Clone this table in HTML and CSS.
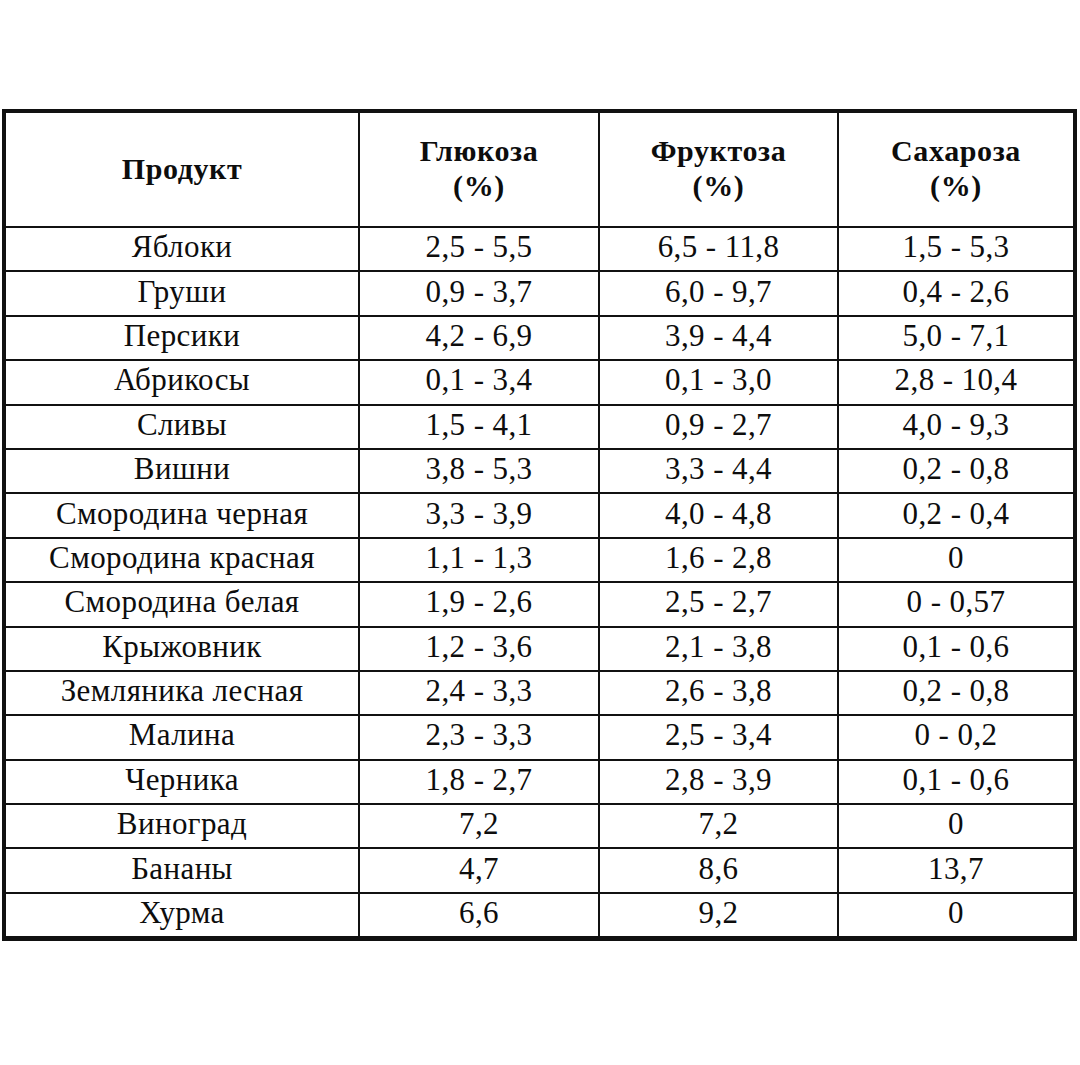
FILE: index.html
```html
<!DOCTYPE html>
<html lang="ru">
<head>
<meta charset="utf-8">
<title>Сахара в фруктах</title>
<link rel="stylesheet" href="styles.css">
</head>
<body>
<div class="frame">
<table class="sugar">
<thead>
<tr><th>Продукт</th><th>Глюкоза<br>(%)</th><th>Фруктоза<br>(%)</th><th>Сахароза<br>(%)</th></tr>
</thead>
<tbody>
<tr><td>Яблоки</td><td>2,5 - 5,5</td><td>6,5 - 11,8</td><td>1,5 - 5,3</td></tr>
<tr><td>Груши</td><td>0,9 - 3,7</td><td>6,0 - 9,7</td><td>0,4 - 2,6</td></tr>
<tr><td>Персики</td><td>4,2 - 6,9</td><td>3,9 - 4,4</td><td>5,0 - 7,1</td></tr>
<tr><td>Абрикосы</td><td>0,1 - 3,4</td><td>0,1 - 3,0</td><td>2,8 - 10,4</td></tr>
<tr><td>Сливы</td><td>1,5 - 4,1</td><td>0,9 - 2,7</td><td>4,0 - 9,3</td></tr>
<tr><td>Вишни</td><td>3,8 - 5,3</td><td>3,3 - 4,4</td><td>0,2 - 0,8</td></tr>
<tr><td>Смородина черная</td><td>3,3 - 3,9</td><td>4,0 - 4,8</td><td>0,2 - 0,4</td></tr>
<tr><td>Смородина красная</td><td>1,1 - 1,3</td><td>1,6 - 2,8</td><td>0</td></tr>
<tr><td>Смородина белая</td><td>1,9 - 2,6</td><td>2,5 - 2,7</td><td>0 - 0,57</td></tr>
<tr><td>Крыжовник</td><td>1,2 - 3,6</td><td>2,1 - 3,8</td><td>0,1 - 0,6</td></tr>
<tr><td>Земляника лесная</td><td>2,4 - 3,3</td><td>2,6 - 3,8</td><td>0,2 - 0,8</td></tr>
<tr><td>Малина</td><td>2,3 - 3,3</td><td>2,5 - 3,4</td><td>0 - 0,2</td></tr>
<tr><td>Черника</td><td>1,8 - 2,7</td><td>2,8 - 3,9</td><td>0,1 - 0,6</td></tr>
<tr><td>Виноград</td><td>7,2</td><td>7,2</td><td>0</td></tr>
<tr><td>Бананы</td><td>4,7</td><td>8,6</td><td>13,7</td></tr>
<tr><td>Хурма</td><td>6,6</td><td>9,2</td><td>0</td></tr>
</tbody>
</table>
</div>
</body>
</html>
```
FILE: styles.css
```css
html, body {
  margin: 0;
  padding: 0;
  background: #fff;
}
body {
  padding-top: 109px;
  padding-left: 2px;
  font-family: "Liberation Serif", "Times New Roman", serif;
  color: #0d0d0d;
}
.frame {
  width: 1067px;
  border: 4px solid #111;
  border-bottom-width: 5px;
}
.sugar {
  width: 100%;
  border-collapse: collapse;
  table-layout: fixed;
}
.sugar th,
.sugar td {
  border: 2px solid #111;
  text-align: center;
  vertical-align: middle;
  padding: 0;
}
.sugar th:first-child { border-left: none; width: 352px; }
.sugar td:first-child { border-left: none; }
.sugar th:nth-child(2) { width: 238px; }
.sugar th:nth-child(3) { width: 237px; }
.sugar th:last-child,
.sugar td:last-child { border-right: none; }
.sugar thead th { border-top: none; }
.sugar tbody tr:last-child td { border-bottom: none; }
.sugar th {
  height: 110px;
  padding-bottom: 3px;
  font-size: 30px;
  font-weight: bold;
  letter-spacing: 0.6px;
  line-height: 35px;
}
.sugar td {
  height: 38.4px;
  padding-bottom: 4px;
  font-size: 31px;
  letter-spacing: 0.4px;
  line-height: 34px;
}
```
